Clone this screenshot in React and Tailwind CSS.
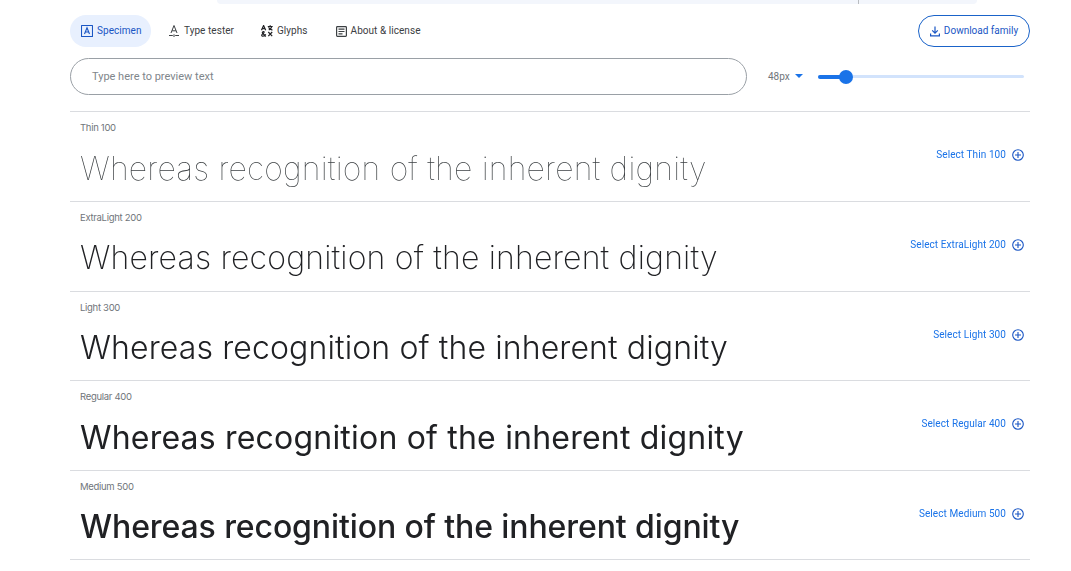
import React from "react";

const rows = [
  { label: "Thin 100", weight: "font-thin", h: "h-[90px]", tx: "text-[#3c4043]", tr: "tracking-[0.2px]", mt: "mt-[11px]" },
  { label: "ExtraLight 200", weight: "font-extralight", h: "h-[90px]", tx: "text-[#202124]", tr: "tracking-[0.17px]", mt: "mt-[10px]" },
  { label: "Light 300", weight: "font-light", h: "h-[89px]", tx: "text-[#202124]", tr: "tracking-[0.12px]", mt: "mt-[10px]" },
  { label: "Regular 400", weight: "font-normal", h: "h-[90px]", tx: "text-[#202124]", tr: "tracking-[0.2px]", mt: "mt-[11px]" },
  { label: "Medium 500", weight: "font-medium", h: "h-[89px]", tx: "text-[#202124]", tr: "tracking-[-0.1px]", mt: "mt-[10px]" },
];

function SpecimenIcon() {
  return (
    <svg width="12" height="12" viewBox="0 0 12 12" fill="none" stroke="#1a56c4" strokeWidth="1.1">
      <rect x="0.5" y="0.5" width="11" height="11" rx="0.5" />
      <path d="M3.5 9 L6 2.8 L8.5 9 M4.3 7 H7.7" />
    </svg>
  );
}

function TesterIcon() {
  return (
    <svg width="12" height="13" viewBox="0 0 12 13" fill="none" stroke="#3c4043" strokeWidth="1">
      <path d="M3 8 L6 0.5 L9 8 M4.1 5.8 H7.9" />
      <path d="M1 10.5 H4.8 M7.2 10.5 H11 M6 9.3 V12" />
    </svg>
  );
}

function GlyphsIcon() {
  return (
    <svg width="12" height="12" viewBox="0 0 12 12" fill="none" stroke="#202124" strokeWidth="1.2">
      <path d="M0.5 5.2 L2.6 0.5 L4.7 5.2 M1.2 3.6 H4" />
      <path d="M6.8 1.5 H11.7 M9.2 0.2 V1.5 M7.8 5 C9.5 4.2 10.3 3 10.7 1.7 M7.5 2.4 C8.3 3.6 9.8 4.6 11.4 5.1" />
      <path d="M4.8 11.5 L1.5 8 C0.8 7 2.7 5.9 3.2 7 C3.5 8 0.7 9 0.7 10.2 C0.7 11.6 3.2 11.8 4.8 9.3" />
      <path d="M7.3 7 L11.2 11.2 M11.2 7 L7.3 11.2" />
    </svg>
  );
}

function AboutIcon() {
  return (
    <svg width="11" height="11" viewBox="0 0 11 11" fill="none" stroke="#3c4043" strokeWidth="1.2">
      <rect x="0.6" y="0.6" width="9.8" height="9.8" rx="0.8" />
      <path d="M2.5 3.2 H8.5 M2.5 5.5 H8.5 M2.5 7.8 H6.5" />
    </svg>
  );
}

function DownloadIcon() {
  return (
    <svg width="10" height="11" viewBox="0 0 10 11" fill="none" stroke="#1a56c4" strokeWidth="1.2">
      <path d="M5 0.5 V7 M2.2 4.4 L5 7.2 L7.8 4.4" />
      <path d="M0.6 7.5 V9.8 H9.4 V7.5" />
    </svg>
  );
}

function PlusIcon() {
  return (
    <svg width="12" height="12" viewBox="0 0 12 12" fill="none" stroke="#1a56c4" strokeWidth="1.1">
      <circle cx="6" cy="6" r="5.3" />
      <path d="M6 3 V9 M3 6 H9" />
    </svg>
  );
}

const Tab = ({ icon, children, active, className }) => (
  <div
    className={`flex items-center h-8 rounded-full gap-[4px] text-[10px] tracking-[0.05px] ${
      active ? "bg-[#e8f0fe] text-[#1a56c4]" : "text-[#3c4043]"
    } ${className}`}
  >
    {icon}
    <span className="-mt-px">{children}</span>
  </div>
);

export default function App() {
  return (
    <div className="w-[1071px] h-[571px] overflow-hidden bg-white font-['Roboto',sans-serif]">
      <div className="flex ml-[217px] w-[760px] h-[4px] bg-[#f3f6fc] rounded-b-[10px]">
        <div className="ml-[641px] w-px h-full bg-[#b9bcc0]" />
      </div>

      <div className="mx-[70px] w-[960px] flex flex-col">
        <div className="flex items-center h-8 mt-[11px]">
          <Tab active icon={<SpecimenIcon />} className="w-[81px] pl-[11px]">Specimen</Tab>
          <Tab icon={<TesterIcon />} className="ml-[17px]">Type tester</Tab>
          <Tab icon={<GlyphsIcon />} className="ml-[27px]">Glyphs</Tab>
          <Tab icon={<AboutIcon />} className="ml-[28px]">About &amp; license</Tab>
          <div className="ml-auto flex items-center justify-center gap-[4px] w-[112px] h-8 rounded-full border border-[#1a63c9] text-[10px] text-[#1a56c4] bg-white">
            <DownloadIcon />
            <span className="-mt-px">Download family</span>
          </div>
        </div>

        <div className="flex items-center mt-[11px] h-[37px]">
          <div className="w-[677px] h-full rounded-full border border-[#9aa0a6] flex items-center pl-[21px] pt-[2px] text-[11px] text-[#80868b]">
            Type here to preview text
          </div>
          <div className="flex items-center ml-[21px] text-[10px] text-[#70757a]">
            <span>48px</span>
            <span className="ml-[5px] mb-[2px] w-0 h-0 border-l-[4px] border-r-[4px] border-t-[4px] border-l-transparent border-r-transparent border-t-[#1a73e8]" />
          </div>
          <div className="relative ml-[15px] w-[206px] h-[3px] rounded-full bg-[#d2e3fc]">
            <div className="w-[28px] h-[4px] -mt-[0.5px] rounded-full bg-[#1a73e8]" />
            <div className="absolute left-[21px] top-[-5.5px] w-[14px] h-[14px] rounded-full bg-[#1a73e8]" />
          </div>
        </div>

        <div className="mt-[16px] border-t border-[#dadce0]">
          {rows.map((r) => (
            <div key={r.label} className={`relative ${r.h} border-b border-[#dadce0] px-[10px] box-border`}>
              <div className="text-[9.5px] leading-[12px] pt-[10px] h-[22px] text-[#70757a] font-['Inter',sans-serif] tracking-[-0.3px]">{r.label}</div>
              <div className={`${r.mt} text-[32px] leading-[48px] whitespace-nowrap font-['Inter',sans-serif] will-change-transform ${r.weight} ${r.tx} ${r.tr}`}>
                Whereas recognition of the inherent dignity
              </div>
              <div className="absolute right-[6px] top-[35px] flex items-center gap-[6px] text-[10px] tracking-[0.08px] text-[#1a73e8]">
                <span>Select {r.label}</span>
                <PlusIcon />
              </div>
            </div>
          ))}
        </div>
      </div>
    </div>
  );
}
